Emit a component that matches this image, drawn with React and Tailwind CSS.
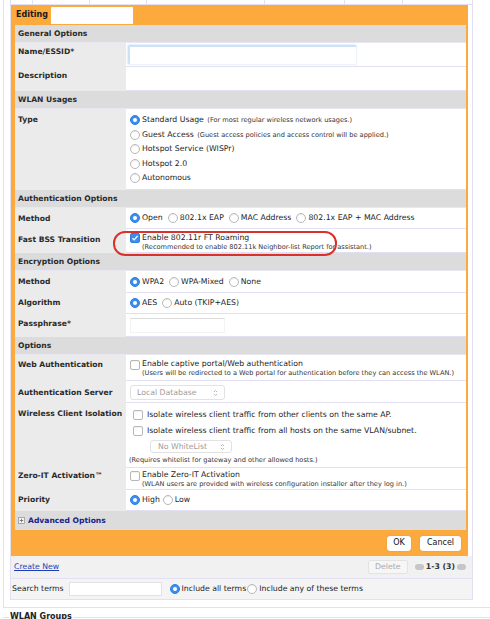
import React from "react";

// small building blocks
const Radio = ({ on }) =>
  on ? (
    <span className="inline-flex w-[10px] h-[10px] shrink-0 items-center justify-center rounded-full bg-[#3b8ef0] border border-[#2f7fe0]">
      <span className="w-[4px] h-[4px] rounded-full bg-white" />
    </span>
  ) : (
    <span className="inline-block w-[10px] h-[10px] shrink-0 rounded-full border border-[#b8b8b8] bg-white shadow-[inset_0_1px_1px_rgba(0,0,0,0.08)]" />
  );

const Check = ({ on }) =>
  on ? (
    <span className="inline-flex w-[10px] h-[10px] shrink-0 items-center justify-center rounded-[2px] bg-[#3b8ef0] border border-[#2f7fe0]">
      <svg width="8" height="8" viewBox="0 0 8 8">
        <path d="M1.5 4.2 L3.2 5.9 L6.6 1.8" fill="none" stroke="white" strokeWidth="1.3" />
      </svg>
    </span>
  ) : (
    <span className="inline-block w-[10px] h-[10px] shrink-0 rounded-[2px] border border-[#b8b8b8] bg-white shadow-[inset_0_1px_1px_rgba(0,0,0,0.06)]" />
  );

const Opt = ({ on, children }) => (
  <span className="flex items-center gap-[2px]">
    <Radio on={on} />
    <span>{children}</span>
  </span>
);

const Arrows = () => (
  <svg width="5" height="8" viewBox="0 0 5 8">
    <path d="M1 3 L2.5 1.5 L4 3 M1 5 L2.5 6.5 L4 5" fill="none" stroke="#b0b0b0" strokeWidth="0.9" />
  </svg>
);

const Header = ({ children }) => (
  <div className="h-[18px] flex items-center bg-[#dcdcdc] pl-[3px] font-bold text-[7.6px] text-[#2a2a2a] border-b border-[#e9e7f2]">
    {children}
  </div>
);

const Row = ({ label, h, pt = 5, children }) => (
  <div className="flex" style={{ height: h }}>
    <div
      className="w-[111px] shrink-0 bg-[#ebebeb] pl-[3px] font-bold text-[7.6px] leading-[10px] text-[#2a2a2a]"
      style={{ paddingTop: pt }}
    >
      {label}
    </div>
    <div className="flex-1 bg-white border-b border-[#e4e0f4] pl-[4px] text-[7.75px] text-[#1e1e1e]">
      {children}
    </div>
  </div>
);

const Small = ({ children, className = "" }) => (
  <span className={"text-[6.6px] text-[#333] " + className}>{children}</span>
);

export default function App() {
  return (
    <div className="relative w-[490px] h-[619px] overflow-hidden bg-white font-['DejaVu_Sans',sans-serif] text-[#1e1e1e]">
      {/* outer WLANs box */}
      <div className="ml-[3px] w-[490px] border-l border-b border-[#e3e3e3] pl-[6px] pb-[7px]">
        <div className="w-[463px] border-x border-[#e4e0f4] border-b">
          {/* bottom of the list table above */}
          <div className="flex h-[5px] border-b border-[#e4e0f4]">
            <div className="w-[22px] border-r border-[#e4e0f4]" />
            <div className="w-[57px] border-r border-[#e4e0f4]" />
            <div className="w-[57px] border-r border-[#e4e0f4]" />
            <div className="w-[118px] border-r border-[#e4e0f4]" />
            <div className="w-[80px] border-r border-[#e4e0f4]" />
            <div className="w-[58px] border-r border-[#e4e0f4]" />
            <div className="flex-1" />
          </div>

          {/* editing panel */}
          <div className="w-[457px] bg-[#fcaa3e] pl-[4px] pr-[2px]">
            <div className="h-[20px] flex items-center">
              <span className="pl-[1px] font-bold text-[8px] text-[#1a1a1a]">Editing</span>
              <span className="ml-[3px] w-[82px] h-[17px] bg-white" />
            </div>

            <Header>General Options</Header>
            <Row label="Name/ESSID*" h={24} pt={4}>
              <div className="ml-[-1px] mt-[3px] w-[228px] h-[19px] border border-[#cfe1f6] border-r-[#eef3fa] border-b-[#eef3fa] shadow-[-1px_-1px_2px_#b9d3f1]" />
            </Row>
            <Row label="Description" h={24} pt={4} />

            <Header>WLAN Usages</Header>
            <Row label="Type" h={81} pt={6}>
              <div className="pt-[4px] leading-[14.5px]">
                <Opt on>
                  Standard Usage <Small className="ml-[1px]">(For most regular wireless network usages.)</Small>
                </Opt>
                <Opt>
                  Guest Access <Small className="ml-[1px]">(Guest access policies and access control will be applied.)</Small>
                </Opt>
                <Opt>Hotspot Service (WISPr)</Opt>
                <Opt>Hotspot 2.0</Opt>
                <Opt>Autonomous</Opt>
              </div>
            </Row>

            <Header>Authentication Options</Header>
            <Row label="Method" h={21} pt={6}>
              <div className="flex items-center gap-[5px] h-full">
                <Opt on>Open</Opt>
                <Opt>802.1x EAP</Opt>
                <Opt>MAC Address</Opt>
                <Opt>802.1x EAP + MAC Address</Opt>
              </div>
            </Row>
            <Row label="Fast BSS Transition" h={24} pt={6}>
              <div className="flex items-start gap-[2px] pt-[4px]">
                <Check on />
                <div className="leading-[9px]">
                  <div>Enable 802.11r FT Roaming</div>
                  <Small>(Recommended to enable 802.11k Neighbor-list Report for assistant.)</Small>
                </div>
              </div>
            </Row>

            <Header>Encryption Options</Header>
            <Row label="Method" h={22} pt={6}>
              <div className="flex items-center gap-[5px] h-full">
                <Opt on>WPA2</Opt>
                <Opt>WPA-Mixed</Opt>
                <Opt>None</Opt>
              </div>
            </Row>
            <Row label="Algorithm" h={21} pt={5}>
              <div className="flex items-center gap-[5px] h-full">
                <Opt on>AES</Opt>
                <Opt>Auto (TKIP+AES)</Opt>
              </div>
            </Row>
            <Row label="Passphrase*" h={23} pt={5}>
              <div className="mt-[4px] w-[95px] h-[15px] border border-[#f3f3f3] border-t-[#dcdcdc]" />
            </Row>

            <Header>Options</Header>
            <Row label="Web Authentication" h={26} pt={5}>
              <div className="flex items-start gap-[2px] pt-[5px]">
                <Check />
                <div className="leading-[8.5px]">
                  <div>Enable captive portal/Web authentication</div>
                  <Small>
                    (Users will be redirected to a Web portal for authentication before they can access the WLAN.)
                  </Small>
                </div>
              </div>
            </Row>
            <Row label="Authentication Server" h={22} pt={7}>
              <div className="mt-[4px] w-[95px] h-[15px] flex items-center justify-between rounded-[3px] border border-[#e2e2e2] px-[6px] text-[#9d9d9d]">
                <span>Local Database</span>
                <Arrows />
              </div>
            </Row>
            <Row label="Wireless Client Isolation" h={65} pt={6}>
              <div className="pt-[4px]">
                <div className="flex items-center gap-[4px] h-[16px] pl-[3px]">
                  <Check />
                  <span>Isolate wireless client traffic from other clients on the same AP.</span>
                </div>
                <div className="flex items-center gap-[4px] h-[16px] pl-[3px]">
                  <Check />
                  <span>Isolate wireless client traffic from all hosts on the same VLAN/subnet.</span>
                </div>
                <div className="ml-[20px] mt-[1px] w-[82px] h-[13px] flex items-center justify-between rounded-[3px] border border-[#e2e2e2] pl-[7px] pr-[6px] text-[#9d9d9d]">
                  <span>No WhiteList</span>
                  <Arrows />
                </div>
                <div className="leading-[10px] mt-[2px] ml-[-1px]">
                  <Small>(Requires whitelist for gateway and other allowed hosts.)</Small>
                </div>
              </div>
            </Row>
            <Row label="Zero-IT Activation™" h={22} pt={3}>
              <div className="flex items-start gap-[2px] pt-[3px]">
                <Check />
                <div className="leading-[8.5px]">
                  <div>Enable Zero-IT Activation</div>
                  <Small>(WLAN users are provided with wireless configuration installer after they log in.)</Small>
                </div>
              </div>
            </Row>
            <Row label="Priority" h={21} pt={5}>
              <div className="flex items-center gap-[3px] h-full">
                <Opt on>High</Opt>
                <Opt>Low</Opt>
              </div>
            </Row>

            <div className="h-[19px] flex items-center gap-[3px] bg-[#dcdcdc] pl-[3px]">
              <svg width="7" height="7" viewBox="0 0 7 7">
                <rect x="0.5" y="0.5" width="6" height="6" fill="#f4f4f4" stroke="#9a9a9a" strokeWidth="0.8" />
                <path d="M1.8 3.5 H5.2 M3.5 1.8 V5.2" stroke="#666" strokeWidth="0.8" />
              </svg>
              <span className="font-bold text-[7.6px] text-[#1c2288]">Advanced Options</span>
            </div>

            <div className="h-[26px] flex items-center justify-end gap-[9px] pr-[5px]">
              <button className="w-[24px] h-[15px] rounded-[3px] bg-white text-[8px] text-[#111] shadow-[0_0_1px_rgba(0,0,0,0.3)]">
                OK
              </button>
              <button className="w-[41px] h-[15px] rounded-[3px] bg-white text-[8px] text-[#111] shadow-[0_0_1px_rgba(0,0,0,0.3)]">
                Cancel
              </button>
            </div>
          </div>

          {/* list controls */}
          <div className="h-[23px] flex items-center bg-[#f1f1f1] border-b border-[#e4e0f4] pl-[3px] pr-[6px] text-[7.75px]">
            <span className="text-[#1f3fb8] underline">Create New</span>
            <span className="ml-auto w-[40px] h-[14px] flex items-center justify-center rounded-[2px] border border-[#e3e3e3] bg-[#f6f6f6] text-[#a9a9a9]">
              Delete
            </span>
            <span className="ml-[7px] flex items-center gap-[2px] font-bold text-[#333]">
              <span className="w-[9px] h-[6px] rounded-full bg-[#c6c6c6]" />
              <span>1-3 (3)</span>
              <span className="w-[9px] h-[6px] rounded-full bg-[#c6c6c6]" />
            </span>
          </div>
          <div className="h-[20px] flex items-center bg-[#f4f4f4] text-[7.75px]">
            <span className="pl-[1px]">Search terms</span>
            <span className="ml-[5px] w-[93px] h-[14px] bg-white border border-[#e2e2e2]" />
            <span className="ml-[8px] flex items-center gap-[2px]">
              <Radio on />
              <span>Include all terms</span>
            </span>
            <span className="ml-[1px] flex items-center gap-[2px]">
              <Radio />
              <span>Include any of these terms</span>
            </span>
          </div>
        </div>
      </div>

      {/* next fieldset */}
      <div className="flex items-center h-[12px] mt-[3px] ml-[3px]">
        <span className="w-[6px] border-t border-[#e3e3e3]" />
        <span className="px-[1px] font-bold text-[8px] text-[#222]">WLAN Groups</span>
        <span className="flex-1 border-t border-[#e3e3e3]" />
      </div>

      {/* annotation around the FT roaming option */}
      <div className="absolute left-[113px] top-[231px] w-[224px] h-[25px] rounded-[12px] border-2 border-[#d8322b]" />
    </div>
  );
}
